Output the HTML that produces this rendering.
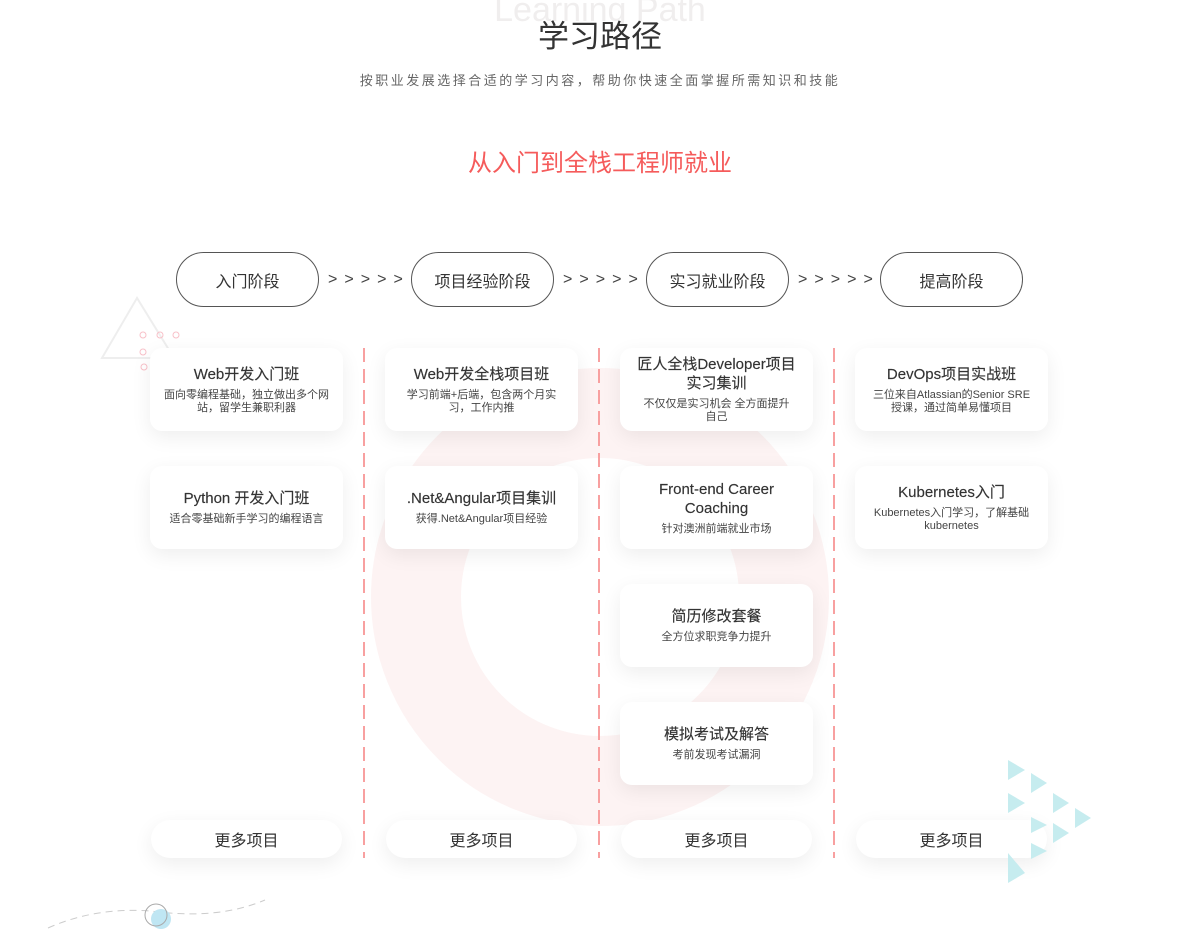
<!DOCTYPE html>
<html><head><meta charset="utf-8"><style>
*{margin:0;padding:0;box-sizing:border-box}
body{width:1200px;height:930px;background:#fff;position:relative;overflow:hidden;font-family:"Liberation Sans","Noto Sans CJK SC",sans-serif;color:#333}
.abs{position:absolute}
.c{text-align:center}
.pill{position:absolute;top:252px;width:143px;height:55px;border:1px solid #555;border-radius:28px;display:flex;align-items:center;justify-content:center;font-size:16px;color:#333;background:#fff}
.arr{position:absolute;top:271px;font-size:16px;color:#444;letter-spacing:1.3px}
.card{position:absolute;width:193px;height:83px;background:#fff;border-radius:12px;box-shadow:0 6px 20px rgba(0,0,0,0.07);display:flex;flex-direction:column;align-items:center;justify-content:center;text-align:center;padding:0 14px}
.card h4{font-size:15px;font-weight:normal;color:#333;line-height:19px;-webkit-text-stroke:.15px #333}
.card p{font-size:11px;color:#444;line-height:13px;margin-top:5px}
.more{position:absolute;top:820px;width:191px;height:38px;border-radius:19px;background:#fff;box-shadow:0 6px 20px rgba(0,0,0,0.07);display:flex;align-items:center;justify-content:center;font-size:16px;color:#333}
.dash{position:absolute;top:348px;width:2px;height:510px;background:repeating-linear-gradient(#f8a0a0 0 14px,transparent 14px 21px)}
</style></head><body>
<div class="abs" style="left:371px;top:368px;width:458px;height:458px;border-radius:50%;border:90px solid #fdf3f3"></div>
<svg class="abs" style="left:100px;top:296px" width="90" height="64"><polygon points="37,2 2,62 74,62" fill="none" stroke="#eee" stroke-width="2"/><g fill="none" stroke="#f8c0c8"><circle cx="43" cy="39" r="3"/><circle cx="60" cy="39" r="3"/><circle cx="76" cy="39" r="3"/><circle cx="43" cy="56" r="3"/></g></svg>
<svg class="abs" style="left:140px;top:363px" width="10" height="10"><circle cx="4" cy="4" r="3" fill="none" stroke="#f8c0c8"/></svg>
<div class="abs c" style="left:0;width:1200px;top:-9px;font-size:34px;color:#f0eeee;font-family:'Liberation Sans',sans-serif">Learning Path</div>
<div class="abs c" style="left:0;width:1200px;top:11px;font-size:31px;color:#333">学习路径</div>
<div class="abs c" style="left:0;width:1200px;top:70px;font-size:13px;color:#666;letter-spacing:2.5px">按职业发展选择合适的学习内容，帮助你快速全面掌握所需知识和技能</div>
<div class="abs c" style="left:0;width:1200px;top:143px;font-size:24px;color:#f55b5b">从入门到全栈工程师就业</div>
<div class="pill" style="left:176px">入门阶段</div>
<div class="pill" style="left:411px">项目经验阶段</div>
<div class="pill" style="left:646px">实习就业阶段</div>
<div class="pill" style="left:880px">提高阶段</div>
<div class="arr" style="left:328px">&gt; &gt; &gt; &gt; &gt;</div>
<div class="arr" style="left:563px">&gt; &gt; &gt; &gt; &gt;</div>
<div class="arr" style="left:798px">&gt; &gt; &gt; &gt; &gt;</div>
<div class="dash" style="left:363px"></div>
<div class="dash" style="left:598px"></div>
<div class="dash" style="left:833px"></div>
<div class="card" style="left:150px;top:348px"><h4>Web开发入门班</h4><p>面向零编程基础，独立做出多个网站，留学生兼职利器</p></div>
<div class="card" style="left:150px;top:466px"><h4>Python 开发入门班</h4><p>适合零基础新手学习的编程语言</p></div>
<div class="card" style="left:385px;top:348px"><h4>Web开发全栈项目班</h4><p>学习前端+后端，包含两个月实习，工作内推</p></div>
<div class="card" style="left:385px;top:466px"><h4>.Net&amp;Angular项目集训</h4><p>获得.Net&amp;Angular项目经验</p></div>
<div class="card" style="left:620px;top:348px"><h4>匠人全栈Developer项目<br>实习集训</h4><p>不仅仅是实习机会 全方面提升<br>自己</p></div>
<div class="card" style="left:620px;top:466px"><h4>Front-end Career Coaching</h4><p>针对澳洲前端就业市场</p></div>
<div class="card" style="left:620px;top:584px"><h4>简历修改套餐</h4><p>全方位求职竞争力提升</p></div>
<div class="card" style="left:620px;top:702px"><h4>模拟考试及解答</h4><p>考前发现考试漏洞</p></div>
<div class="card" style="left:855px;top:348px"><h4>DevOps项目实战班</h4><p>三位来自Atlassian的Senior SRE<br>授课，通过简单易懂项目</p></div>
<div class="card" style="left:855px;top:466px"><h4>Kubernetes入门</h4><p>Kubernetes入门学习，了解基础<br>kubernetes</p></div>
<div class="more" style="left:151px">更多项目</div>
<div class="more" style="left:386px">更多项目</div>
<div class="more" style="left:621px">更多项目</div>
<div class="more" style="left:856px">更多项目</div>
<svg class="abs" style="left:1005px;top:755px" width="95" height="135"><g fill="#c6ecef"><polygon points="3,5 3,25 20,15"/><polygon points="26,18 26,38 42,28"/><polygon points="3,38 3,58 20,48"/><polygon points="48,38 48,58 64,48"/><polygon points="70,53 70,73 86,63"/><polygon points="26,62 26,78 42,70"/><polygon points="48,68 48,88 64,78"/><polygon points="26,88 26,104 42,96"/><polygon points="3,98 3,128 20,118"/></g></svg>
<svg class="abs" style="left:40px;top:895px" width="240" height="35"><path d="M8,33 Q60,10 120,17 T225,5" fill="none" stroke="#ccc" stroke-dasharray="7,5"/><circle cx="121" cy="24" r="10" fill="#bfe6f3"/><circle cx="116" cy="20" r="11" fill="none" stroke="#aaa"/></svg>
</body></html>
